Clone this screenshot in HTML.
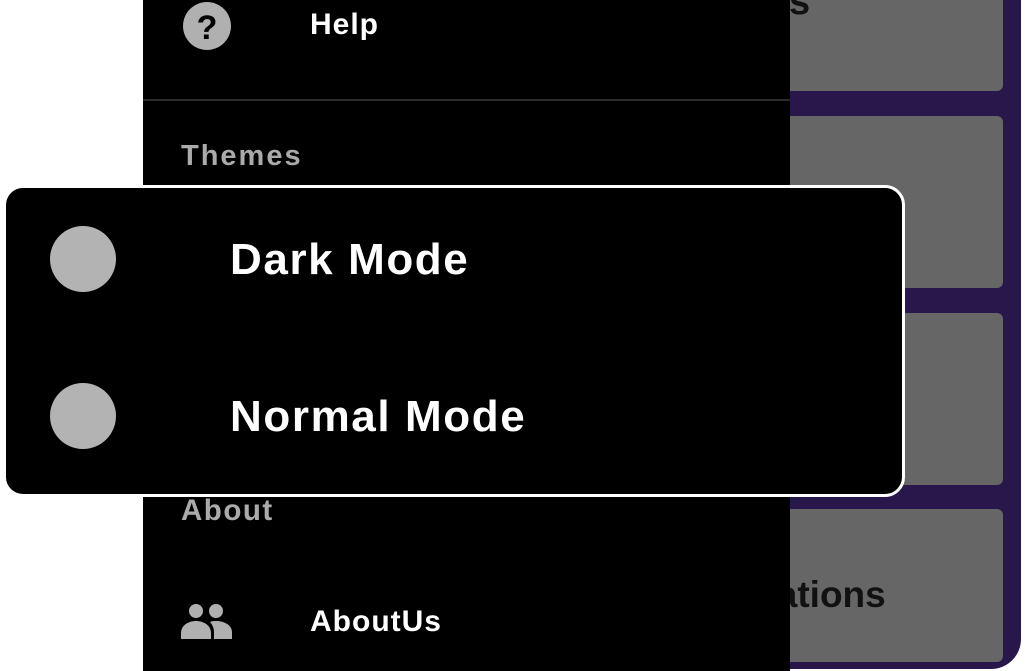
<!DOCTYPE html>
<html><head><style>
body{margin:0;width:1025px;height:671px;background:#fff;position:relative;overflow:hidden;font-family:"Liberation Sans",sans-serif;font-weight:bold}
.abs{position:absolute}
.card{position:absolute;left:780px;width:223px;background:#666;border-radius:6px}
</style></head><body>
<div class="abs" style="left:760px;top:-30px;width:261px;height:699px;background:#28174a;border-radius:30px"></div>
<div class="card" style="top:-10px;height:101px"></div>
<div class="card" style="top:116px;height:172px"></div>
<div class="card" style="top:313px;height:172px"></div>
<div class="card" style="top:509px;height:153px"></div>
<div class="abs" style="left:789px;top:-19px;font-size:38px;color:#111">s</div>
<div class="abs" style="left:711px;top:574px;font-size:37px;color:#111">Locations</div>
<div class="abs" style="left:143px;top:0;width:647px;height:671px;background:#000"></div>
<div class="abs" style="left:143px;top:99px;width:647px;height:2px;background:#2a2a2a"></div>
<svg class="abs" style="left:183px;top:2px" width="48" height="48" viewBox="0 0 24 24"><circle cx="12" cy="12" r="12" fill="#b0b0b0"/><text x="12" y="18.5" text-anchor="middle" font-family="Liberation Sans" font-weight="bold" font-size="17" fill="#000">?</text></svg>
<div class="abs" style="left:310px;top:8px;font-size:30px;color:#fff;letter-spacing:1px">Help</div>
<div class="abs" style="left:181px;top:140px;font-size:29px;color:#aaa;letter-spacing:2px">Themes</div>
<div class="abs" style="left:181px;top:494px;font-size:29.5px;color:#aaa;letter-spacing:1.5px">About</div>
<svg class="abs" style="left:181px;top:603px" width="54" height="36" viewBox="0 0 54 36"><circle cx="15" cy="8" r="7" fill="#b0b0b0"/><circle cx="35" cy="8" r="7" fill="#b0b0b0"/><path d="M0 36V30C0 22 8 18 15 18S30 22 30 30V36Z" fill="#b0b0b0"/><path d="M33 36V29C33 25 31 21 29 19C31 18 33 18 35 18C43 18 51 22 51 29V36Z" fill="#b0b0b0"/></svg>
<div class="abs" style="left:310px;top:605px;font-size:30px;color:#fff;letter-spacing:1px">AboutUs</div>
<div class="abs" style="left:3px;top:185px;width:896px;height:306px;background:#000;border:3px solid #fff;border-radius:20px"></div>
<div class="abs" style="left:50px;top:226px;width:66px;height:66px;border-radius:50%;background:#b3b3b3"></div>
<div class="abs" style="left:50px;top:383px;width:66px;height:66px;border-radius:50%;background:#b3b3b3"></div>
<div class="abs" style="left:230px;top:235px;font-size:44px;color:#fff;letter-spacing:1.6px">Dark Mode</div>
<div class="abs" style="left:230px;top:392px;font-size:44px;color:#fff;letter-spacing:1.6px">Normal Mode</div>
</body></html>
